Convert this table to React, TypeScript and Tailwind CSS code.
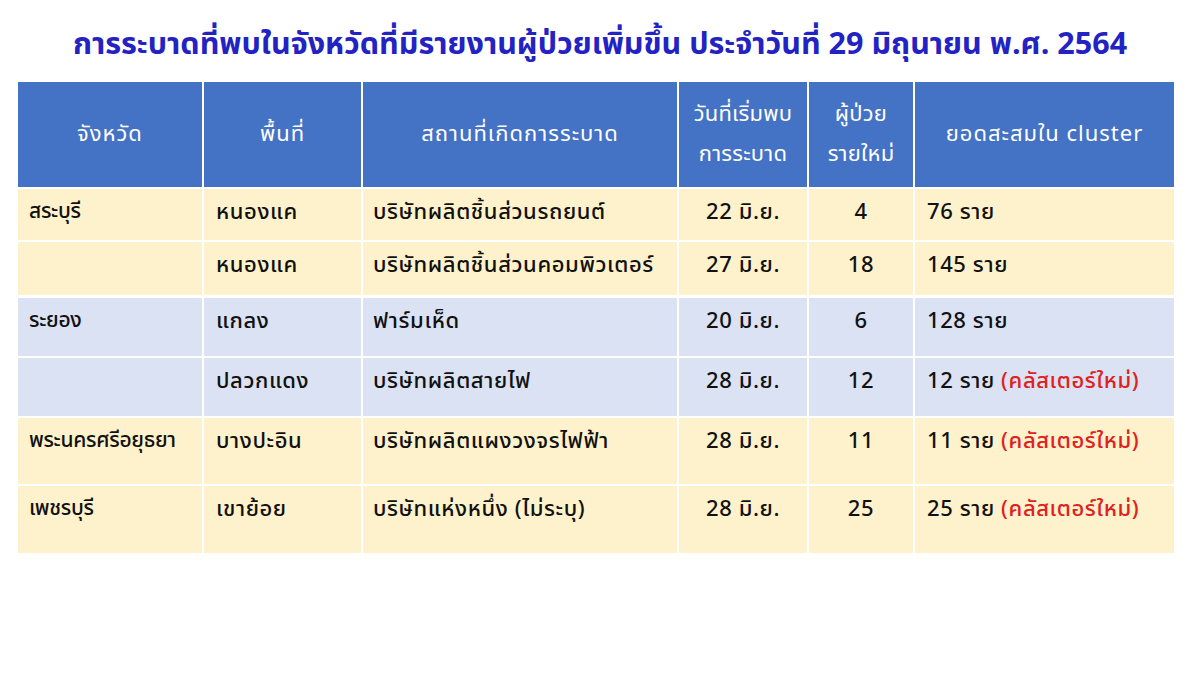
const font = { fontFamily: 'Tahoma, "Noto Sans Thai", "Noto Sans Thai UI", Loma, Garuda, "DejaVu Sans", sans-serif' };

type Row = {
  province: string;
  area: string;
  place: string;
  date: string;
  cases: string;
  total: string;
  isNew?: boolean;
  tone: 'yellow' | 'blue';
  h: string;
};

const rows: Row[] = [
  { province: 'สระบุรี', area: 'หนองแค', place: 'บริษัทผลิตชิ้นส่วนรถยนต์', date: '22 มิ.ย.', cases: '4', total: '76 ราย', tone: 'yellow', h: 'h-[53px]' },
  { province: '', area: 'หนองแค', place: 'บริษัทผลิตชิ้นส่วนคอมพิวเตอร์', date: '27 มิ.ย.', cases: '18', total: '145 ราย', tone: 'yellow', h: 'h-[55px]' },
  { province: 'ระยอง', area: 'แกลง', place: 'ฟาร์มเห็ด', date: '20 มิ.ย.', cases: '6', total: '128 ราย', tone: 'blue', h: 'h-[61px]' },
  { province: '', area: 'ปลวกแดง', place: 'บริษัทผลิตสายไฟ', date: '28 มิ.ย.', cases: '12', total: '12 ราย', isNew: true, tone: 'blue', h: 'h-[60px]' },
  { province: 'พระนครศรีอยุธยา', area: 'บางปะอิน', place: 'บริษัทผลิตแผงวงจรไฟฟ้า', date: '28 มิ.ย.', cases: '11', total: '11 ราย', isNew: true, tone: 'yellow', h: 'h-[68px]' },
  { province: 'เพชรบุรี', area: 'เขาย้อย', place: 'บริษัทแห่งหนึ่ง (ไม่ระบุ)', date: '28 มิ.ย.', cases: '25', total: '25 ราย', isNew: true, tone: 'yellow', h: 'h-[68px]' },
];

export default function App() {
  return (
    <div className="w-[1200px] h-[675px] bg-white overflow-hidden" style={font}>
      <h1 className="text-center text-[30.5px] font-bold text-[#2323c4] pt-[24px] leading-[42px]">
        การระบาดที่พบในจังหวัดที่มีรายงานผู้ป่วยเพิ่มขึ้น ประจำวันที่ 29 มิถุนายน พ.ศ. 2564
      </h1>
      <div className="px-[18px] pt-[16px]">
        <table className="w-[1156px] border-collapse table-fixed text-[22px] font-medium tracking-[0.6px] text-[#111]">
          <colgroup>
            <col className="w-[185px]" />
            <col className="w-[159px]" />
            <col className="w-[316px]" />
            <col className="w-[130px]" />
            <col className="w-[106px]" />
            <col className="w-[260px]" />
          </colgroup>
          <thead>
            <tr className="h-[106px] bg-[#4472c4] text-white tracking-[1px]">
              <th className="font-normal border-2 border-white border-t-0 border-l-0">จังหวัด</th>
              <th className="font-normal border-2 border-white border-t-0">พื้นที่</th>
              <th className="font-normal border-2 border-white border-t-0">สถานที่เกิดการระบาด</th>
              <th className="font-normal border-2 border-white border-t-0 leading-[40px] tracking-[0.2px]">
                วันที่เริ่มพบ
                <br />
                การระบาด
              </th>
              <th className="font-normal border-2 border-white border-t-0 leading-[40px] tracking-[0.2px]">
                ผู้ป่วย
                <br />
                รายใหม่
              </th>
              <th className="font-normal border-2 border-white border-t-0 border-r-0">ยอดสะสมใน cluster</th>
            </tr>
          </thead>
          <tbody>
            {rows.map((r, i) => (
              <tr
                key={i}
                className={`${r.h} ${r.tone === 'yellow' ? 'bg-[#fef2cc]' : 'bg-[#dae2f3]'} ${i === 2 ? 'border-t-[3px] border-white' : ''}`}
              >
                <td className="align-top pt-[7px] pl-[11px] text-[21px] tracking-[-0.3px] whitespace-nowrap border-2 border-white border-l-0 border-b-0">
                  {r.province}
                </td>
                <td className="align-top pt-[7px] pl-[12px] border-2 border-white border-b-0">{r.area}</td>
                <td className="align-top pt-[7px] pl-[10px] whitespace-nowrap border-2 border-white border-b-0">{r.place}</td>
                <td className="align-top pt-[7px] text-center border-2 border-white border-b-0">{r.date}</td>
                <td className="align-top pt-[7px] text-center border-2 border-white border-b-0">{r.cases}</td>
                <td className="align-top pt-[7px] pl-[12px] whitespace-nowrap border-2 border-white border-r-0 border-b-0">
                  {r.total}
                  {r.isNew && <span className="text-[#e02020]"> (คลัสเตอร์ใหม่)</span>}
                </td>
              </tr>
            ))}
          </tbody>
        </table>
      </div>
    </div>
  );
}
